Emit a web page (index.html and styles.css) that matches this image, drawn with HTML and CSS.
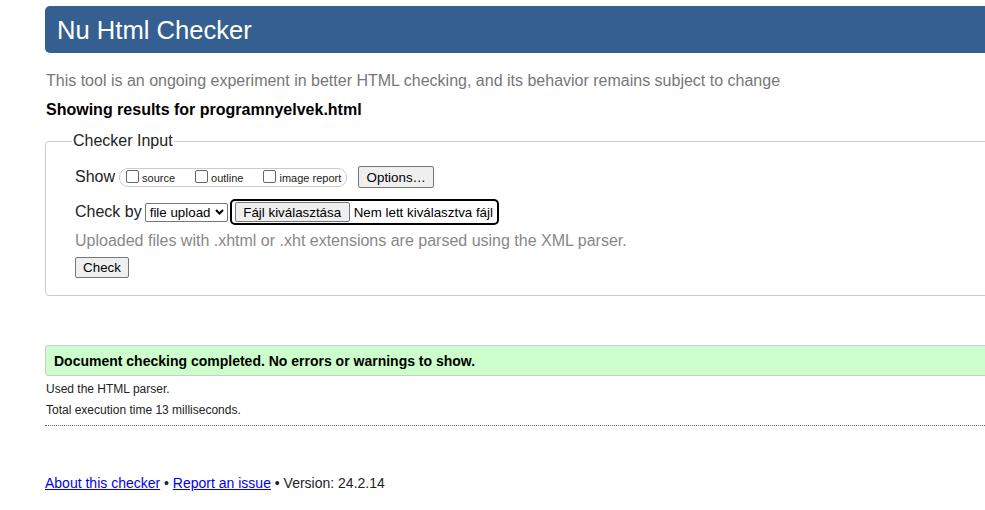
FILE: index.html
```html
<!DOCTYPE html>
<html lang="en">
<head>
<meta charset="utf-8">
<title>Showing results for programnyelvek.html - Nu Html Checker</title>
<link rel="stylesheet" href="styles.css">
</head>
<body>
<div class="page">
  <h1 class="title">Nu Html Checker</h1>
  <p class="intro">This tool is an ongoing experiment in better HTML checking, and its behavior remains subject to change</p>
  <p class="showing">Showing results for programnyelvek.html</p>

  <fieldset class="input-box">
    <legend class="legend">Checker Input</legend>
    <div class="row show-row">
      <span class="label">Show</span>
      <span class="opts">
        <label class="opt"><span class="cb"></span><span class="opt-text">source</span></label>
        <label class="opt"><span class="cb"></span><span class="opt-text">outline</span></label>
        <label class="opt"><span class="cb"></span><span class="opt-text">image report</span></label>
      </span>
      <span class="btn options-btn">Options…</span>
    </div>
    <div class="row checkby-row">
      <span class="label">Check by</span>
      <span class="select">file upload<svg class="chev" width="9" height="6" viewBox="0 0 9 6"><path d="M1 1 L4.5 4.5 L8 1" fill="none" stroke="#000" stroke-width="2"/></svg></span>
      <span class="file">
        <span class="btn file-btn">Fájl kiválasztása</span>
        <span class="file-text">Nem lett kiválasztva fájl</span>
      </span>
    </div>
    <p class="hint">Uploaded files with .xhtml or .xht extensions are parsed using the XML parser.</p>
    <div class="row">
      <span class="btn check-btn">Check</span>
    </div>
  </fieldset>

  <p class="success">Document checking completed. No errors or warnings to show.</p>
  <p class="small">Used the HTML parser.</p>
  <p class="small">Total execution time 13 milliseconds.</p>
  <hr class="dotted">

  <p class="footer"><a href="#">About this checker</a> • <a href="#">Report an issue</a> • Version: 24.2.14</p>
</div>
</body>
</html>
```
FILE: styles.css
```css
html {
  overflow: hidden;
}
body {
  margin: 0;
  font-family: "Liberation Sans", Arial, sans-serif;
  color: #000;
  background: #fff;
}
.page {
  margin: 0 -120px 0 45px;
  padding-top: 6px;
}
.title {
  margin: 0;
  background: #365f91;
  color: #fff;
  font-weight: normal;
  font-size: 25.6px;
  line-height: 30px;
  padding: 9px 12px 8px;
  border-radius: 5px;
}
.intro {
  margin: 18px 0 0 1px;
  font-size: 16px;
  line-height: 20px;
  color: #777;
}
.showing {
  margin: 9px 0 0 1px;
  font-size: 16px;
  line-height: 20px;
  font-weight: bold;
}
.input-box {
  margin: 12px 0 0;
  border: 1px solid #ccc;
  border-radius: 4px;
  padding: 16px 28px 17px 29px;
}
.legend {
  font-size: 16px;
  padding: 0 1px;
  margin-left: -3px;
  color: #222;
}
.row {
  display: flex;
  align-items: center;
}
.label {
  font-size: 16px;
  color: #222;
}
.show-row {
  height: 22px;
}
.opts {
  display: inline-flex;
  align-items: center;
  margin-left: 4px;
  height: 17px;
  border: 1px solid #ccc;
  border-radius: 9px;
  padding: 0 5px 0 6px;
  gap: 20px;
}
.opt {
  display: inline-flex;
  align-items: center;
  font-size: 11px;
  color: #222;
}
.opt-text {
  position: relative;
  top: 1px;
}
.cb {
  width: 11px;
  height: 11px;
  border: 1px solid #666;
  border-radius: 2px;
  margin-right: 3px;
  position: relative;
  top: -1px;
}
.btn {
  display: inline-flex;
  align-items: center;
  justify-content: center;
  font-size: 13.33px;
  color: #000;
  background: #efefef;
  border: 1px solid #767676;
  border-radius: 2px;
  box-sizing: border-box;
}
.options-btn {
  margin-left: 11px;
  width: 76px;
  height: 22px;
}
.checkby-row {
  margin-top: 11px;
  height: 26px;
}
.select {
  margin-left: 3px;
  display: inline-flex;
  align-items: center;
  gap: 3px;
  width: 83px;
  height: 19px;
  box-sizing: border-box;
  border: 1px solid #767676;
  border-radius: 2px;
  padding: 0 3px 0 4px;
  font-size: 13.33px;
}
.chev {
  margin-left: auto;
}
.file {
  margin-left: 2px;
  display: inline-flex;
  align-items: center;
  height: 26px;
  box-sizing: border-box;
  border: 2px solid #000;
  border-radius: 5px;
  padding: 0 4px 0 3px;
  font-size: 13.33px;
}
.file-btn {
  width: 115px;
  height: 20px;
}
.file-text {
  margin-left: 4px;
}
.hint {
  margin: 6px 0 0;
  font-size: 16px;
  line-height: 20px;
  color: #888;
}
.check-btn {
  margin-top: 6px;
  width: 54px;
  height: 21px;
}
.success {
  margin: 49px 0 0;
  background: #ccffcc;
  border: 1px solid #ccc;
  border-radius: 3px;
  padding: 6px 8px 5px;
  font-size: 14px;
  line-height: 18px;
  font-weight: bold;
}
.small {
  margin: 6px 0 0 1px;
  font-size: 12px;
  line-height: 15px;
  color: #222;
}
.dotted {
  margin: 7px 0 0;
  border: 0;
  border-top: 1px dotted #666;
  height: 0;
}
.footer {
  margin: 49px 0 0;
  font-size: 14px;
  color: #222;
}
.footer a {
  color: #00e;
}
```
